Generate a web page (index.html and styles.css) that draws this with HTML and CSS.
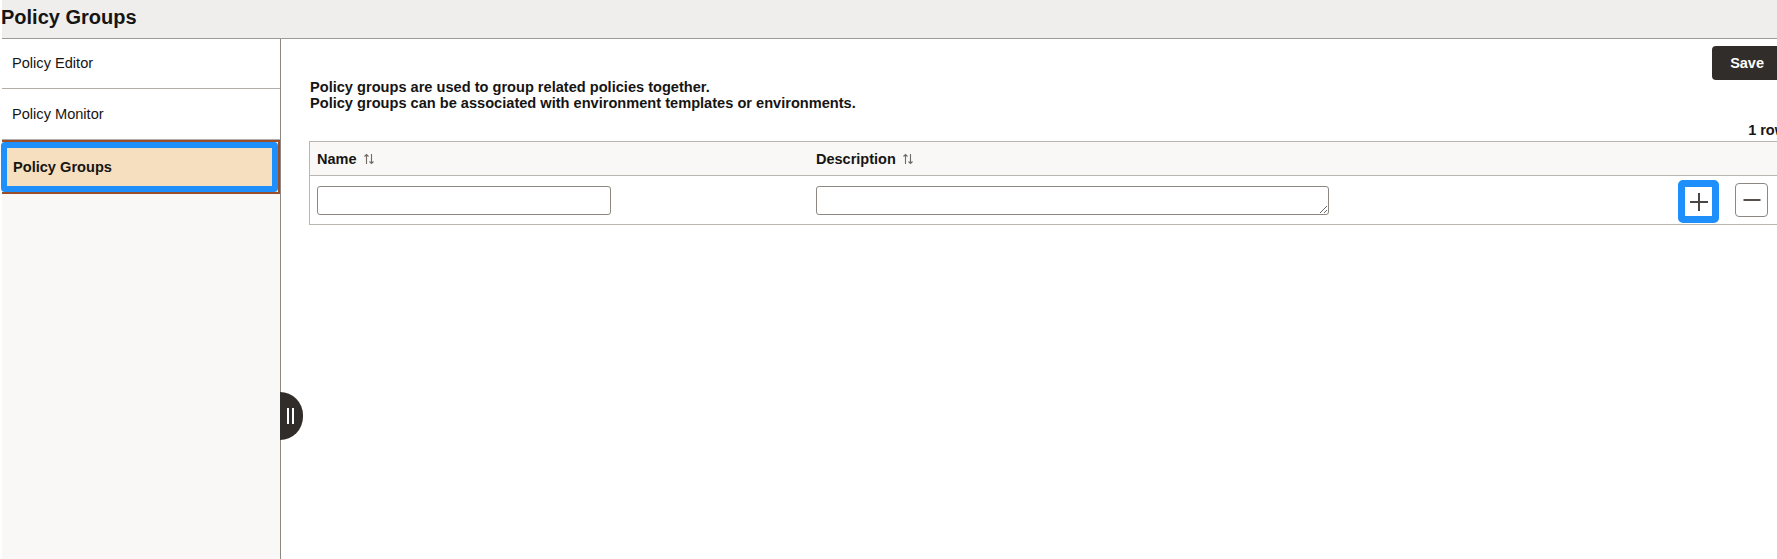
FILE: index.html
```html
<!DOCTYPE html>
<html lang="en">
<head>
<meta charset="utf-8">
<title>Policy Groups</title>
<link rel="stylesheet" href="styles.css">
</head>
<body>
<div class="app">
  <header class="topbar"><h1 class="title">Policy Groups</h1></header>
  <div class="layout">
    <nav class="sidebar">
      <div class="nav-item">Policy Editor</div>
      <div class="nav-item second">Policy Monitor</div>
      <div class="nav-item selected"><div class="focus">Policy Groups</div></div>
    </nav>
    <main class="content">
      <div class="toolbar"><button class="btn-save" type="button">Save</button></div>
      <p class="intro">Policy groups are used to group related policies together.<br>Policy groups can be associated with environment templates or environments.</p>
      <div class="rowcount">1 row</div>
      <div class="table">
        <div class="tr thead">
          <div class="th">Name <svg class="sort" viewBox="0 0 12 12" width="12" height="12"><path d="M3.5 11V1.5M1.5 3.5L3.5 1.5L5.5 3.5M8.5 1V10.5M6.5 8.5L8.5 10.5L10.5 8.5" fill="none" stroke="#6f6a66" stroke-width="1.1"/></svg></div>
          <div class="th">Description <svg class="sort" viewBox="0 0 12 12" width="12" height="12"><path d="M3.5 11V1.5M1.5 3.5L3.5 1.5L5.5 3.5M8.5 1V10.5M6.5 8.5L8.5 10.5L10.5 8.5" fill="none" stroke="#6f6a66" stroke-width="1.1"/></svg></div>
          <div class="th"></div>
        </div>
        <div class="tr tbody">
          <div class="td"><input class="field name-field" type="text"></div>
          <div class="td"><textarea class="field desc-field" rows="1"></textarea></div>
          <div class="td actions">
            <button class="icon-btn add" type="button" aria-label="Add"><svg viewBox="0 0 20 20" width="20" height="20"><path d="M10 1V19M1 10H19" stroke="#4a4643" stroke-width="2"/></svg></button>
            <button class="icon-btn remove" type="button" aria-label="Remove"><svg viewBox="0 0 18 18" width="18" height="18"><path d="M0.5 9H17.5" stroke="#55504c" stroke-width="2"/></svg></button>
          </div>
        </div>
      </div>
    </main>
    <div class="handle"><span></span><span></span></div>
  </div>
</div>
</body>
</html>
```
FILE: styles.css
```css
html, body {
  margin: 0;
  padding: 0;
  overflow: hidden;
  background: #ffffff;
}
body {
  font-family: "Liberation Sans", Arial, sans-serif;
  color: #161513;
}
.app {
  margin-left: 2px;
  width: 1790px;
  height: 559px;
  display: flex;
  flex-direction: column;
}
.topbar {
  height: 38px;
  background: #efeeec;
  border-bottom: 1px solid #9e9a95;
}
.title {
  margin: 0 0 0 -1px;
  font-size: 20px;
  font-weight: bold;
  line-height: 34px;
}
.layout {
  flex: 1;
  display: flex;
  position: relative;
}
.sidebar {
  width: 278px;
  background: #f9f8f6;
  border-right: 1px solid #8c8781;
  flex: none;
}
.nav-item {
  height: 49px;
  line-height: 49px;
  font-size: 14.6px;
  padding-left: 10px;
  background: #ffffff;
  border-bottom: 1px solid #b3aea8;
}
.nav-item.second {
  height: 50px;
  line-height: 50px;
}
.nav-item.selected {
  height: 50px;
  padding: 0;
  background: transparent;
  border-top: 2px solid #9b4e2c;
  border-bottom: 2px solid #9b4e2c;
  border-right: 2px solid #9b4e2c;
}
.focus {
  height: 50px;
  box-sizing: border-box;
  border: 6px solid #1f8ffb;
  border-radius: 4px;
  background: #f5dfbe;
  font-weight: bold;
  line-height: 38px;
  padding-left: 6px;
  margin-left: -1px;
}
.content {
  flex: 1;
  padding: 7px 6px 0 28px;
  display: flex;
  flex-direction: column;
}
.toolbar {
  display: flex;
  justify-content: flex-end;
}
.btn-save {
  height: 34px;
  padding: 0 18px;
  margin-right: 4px;
  background: #312d2a;
  color: #ffffff;
  border: none;
  border-radius: 4px;
  font-family: "Liberation Sans", Arial, sans-serif;
  font-size: 14.5px;
  font-weight: bold;
}
.intro {
  margin: -1px 0 0 1px;
  font-size: 14.6px;
  font-weight: bold;
  line-height: 16px;
}
.rowcount {
  margin-top: 11px;
  text-align: right;
  font-size: 14.5px;
  font-weight: bold;
  line-height: 16px;
}
.table {
  margin-top: 3px;
  border: 1px solid #bcb6b0;
}
.tr {
  display: grid;
  grid-template-columns: 499px 862px 1fr;
}
.thead {
  height: 33px;
  background: #f9f8f6;
  border-bottom: 1px solid #bcb6b0;
}
.th {
  display: flex;
  align-items: center;
  gap: 6px;
  padding-left: 7px;
  font-size: 14.5px;
  font-weight: bold;
}
.sort {
  display: block;
  width: 12px;
  height: 12px;
}
.tbody {
  height: 48px;
}
.td {
  display: flex;
  align-items: center;
  padding-left: 7px;
}
.field {
  box-sizing: border-box;
  height: 29px;
  border: 1px solid #8c8781;
  border-radius: 3px;
  background: #ffffff;
  font-family: "Liberation Sans", Arial, sans-serif;
  font-size: 14px;
  margin: 0;
  padding: 0 6px;
}
.name-field {
  width: 294px;
}
.desc-field {
  width: 513px;
  resize: both;
  display: block;
  padding: 4px 6px;
}
.actions {
  gap: 16px;
  padding-top: 3px;
}
.icon-btn {
  display: flex;
  align-items: center;
  justify-content: center;
  padding: 0;
  margin: 0;
  background: #ffffff;
  box-sizing: border-box;
}
.add {
  width: 41px;
  height: 43px;
  border: 7px solid #1f8ffb;
  border-radius: 5px;
}
.remove {
  width: 33px;
  height: 34px;
  border: 1px solid #8c8781;
  border-radius: 4px;
  margin-top: -3px;
}
.handle {
  position: absolute;
  left: 278px;
  top: 353px;
  width: 23px;
  height: 48px;
  background: #312d2a;
  border-radius: 0 24px 24px 0;
  display: flex;
  justify-content: flex-start;
  align-items: center;
  gap: 3px;
  padding-left: 7px;
  box-sizing: border-box;
}
.handle span {
  width: 2px;
  height: 16px;
  background: #ffffff;
}
```
